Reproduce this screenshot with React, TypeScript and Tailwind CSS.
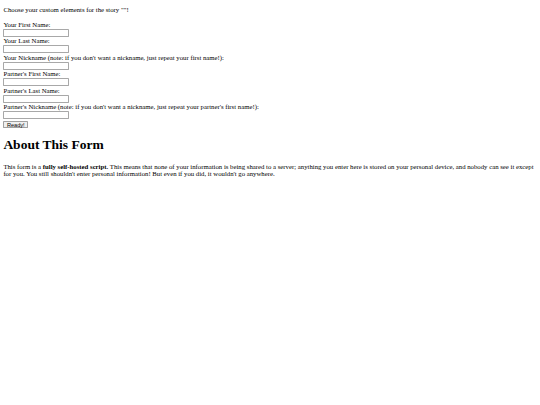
export default function App() {
  const rows = [
    "Your First Name:",
    "Your Last Name:",
    "Your Nickname (note: if you don't want a nickname, just repeat your first name!):",
    "Partner's First Name:",
    "Partner's Last Name:",
    "Partner's Nickname (note: if you don't want a nickname, just repeat your partner's first name!):",
  ];
  return (
    <div className="[zoom:0.421875] min-h-[960px] bg-white px-[8px] pb-[8px] font-['Liberation_Serif','Times_New_Roman',serif] text-[16px] leading-[16px] text-black">
      <p className="pt-[17.5px] leading-[16.5px]">Choose your custom elements for the story ""!</p>
      <form className="mt-[14.5px] flex flex-col items-start">
        {rows.map((r) => (
          <div key={r} className="flex flex-col items-start">
            <label className="block h-[19px] pt-[3px] leading-[16px] whitespace-nowrap">{r}</label>
            <input
              type="text"
              className="mt-[1px] h-[19px] w-[156px] rounded-[2px] border border-[#a8a8a8] bg-white px-[2px] py-0 font-['Liberation_Sans',Arial,sans-serif] text-[13.333px]"
            />
          </div>
        ))}
        <button
          type="button"
          className="mt-[4.6px] h-[17px] w-[58px] rounded-[2px] border border-[#a0a0a0] bg-[#efefef] px-[6px] py-0 font-['Liberation_Sans',Arial,sans-serif] text-[13.333px] leading-[15px] text-black"
        >
          Ready!
        </button>
      </form>
      <h1 className="mt-[21px] text-[32px] font-bold leading-[37px]">About This Form</h1>
      <p className="mt-[26.5px] leading-[16px]">
        This form is a <b>fully self-hosted script.</b> This means that none of your information is being
        shared to a server; anything you enter here is stored on your personal device, and nobody can see it
        except for you. You still shouldn't enter personal information! But even if you did, it wouldn't go
        anywhere.
      </p>
    </div>
  );
}
